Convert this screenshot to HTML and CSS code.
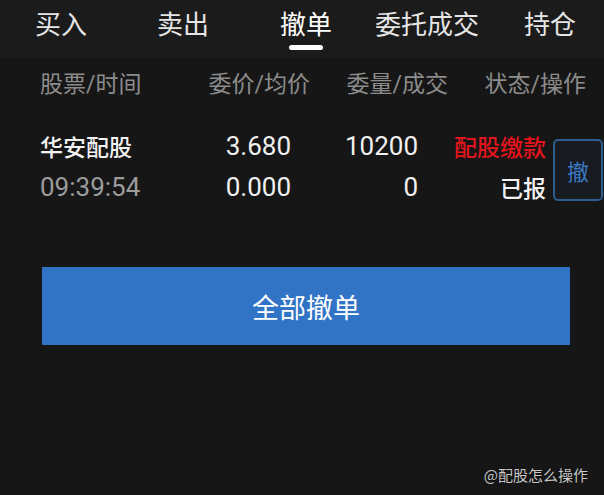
FILE: index.html
```html
<!DOCTYPE html>
<html lang="zh-CN">
<head>
<meta charset="utf-8">
<title>撤单</title>
<link rel="stylesheet" href="styles.css">
</head>
<body>
<div class="screen">
  <nav class="tabs">
    <span class="tab">买入</span>
    <span class="tab">卖出</span>
    <span class="tab active">撤单</span>
    <span class="tab">委托成交</span>
    <span class="tab">持仓</span>
  </nav>
  <div class="head">
    <span>股票/时间</span>
    <span class="r">委价/均价</span>
    <span class="r">委量/成交</span>
    <span class="r">状态/操作</span>
  </div>
  <div class="order">
    <span class="name">华安配股</span>
    <span class="num r">3.680</span>
    <span class="num r">10200</span>
    <span class="status r">配股缴款</span>
    <button class="cancel">撤</button>
    <span class="time">09:39:54</span>
    <span class="num r">0.000</span>
    <span class="num r">0</span>
    <span class="state r">已报</span>
  </div>
  <div class="actions">
    <button class="all">全部撤单</button>
  </div>
  <div class="mark">@配股怎么操作</div>
</div>
</body>
</html>
```
FILE: styles.css
```css
html, body {
  margin: 0;
  padding: 0;
  background: #161616;
}
.screen {
  position: relative;
  width: 604px;
  height: 495px;
  overflow: hidden;
  background: #161616;
  color: #f0f0f0;
  font-family: Roboto, "Noto Sans CJK SC", sans-serif;
}
.tabs {
  display: grid;
  grid-template-columns: 122px 123px 95px 149px auto;
  padding-left: 35px;
  height: 58px;
  background: #1b1b1b;
  box-sizing: border-box;
}
.tab {
  position: relative;
  font-size: 26px;
  line-height: 50px;
  color: #e6e6e6;
  white-space: nowrap;
}
.tab.active {
  color: #ffffff;
}
.tab.active::after {
  content: "";
  position: absolute;
  left: 9px;
  top: 45px;
  width: 34px;
  height: 5px;
  border-radius: 3px;
  background: #ffffff;
}
.head {
  display: grid;
  grid-template-columns: 160px 110px 138px 138px;
  padding-left: 40px;
  height: 48px;
  align-items: center;
  font-size: 23px;
  color: #8c8c8c;
  white-space: nowrap;
}
.r {
  text-align: right;
}
.order {
  display: grid;
  grid-template-columns: 150px 101px 127px 128px 57px;
  grid-template-rows: 40px 41px;
  padding-left: 40px;
  margin-top: 20px;
  align-items: center;
  font-size: 23px;
  white-space: nowrap;
}
.num {
  font-size: 26px;
}
.name, .state {
  color: #f2f2f2;
  font-weight: 500;
}
.time {
  font-size: 26px;
  color: #9b9b9b;
}
.status {
  color: #e3141c;
  font-weight: 500;
}
.cancel {
  grid-column: 5;
  grid-row: 1 / span 2;
  justify-self: end;
  align-self: start;
  margin-top: 13px;
  width: 50px;
  height: 62px;
  padding: 0;
  background: #181b20;
  border: 2px solid #2f5c8e;
  border-radius: 5px;
  color: #3b78c4;
  font-family: "Noto Sans CJK SC", sans-serif;
  font-size: 22px;
  text-align: center;
}
.actions {
  padding: 60px 34px 0 42px;
}
.all {
  display: block;
  width: 528px;
  height: 78px;
  border: none;
  border-radius: 1px;
  background: #3174c5;
  color: #ffffff;
  font-family: "Noto Sans CJK SC", sans-serif;
  font-size: 27px;
}
.mark {
  position: absolute;
  right: 16px;
  bottom: 10px;
  font-family: "Noto Sans CJK SC", sans-serif;
  font-size: 15px;
  color: #c8c8c8;
  text-shadow: 0 0 1px #000;
}
```
